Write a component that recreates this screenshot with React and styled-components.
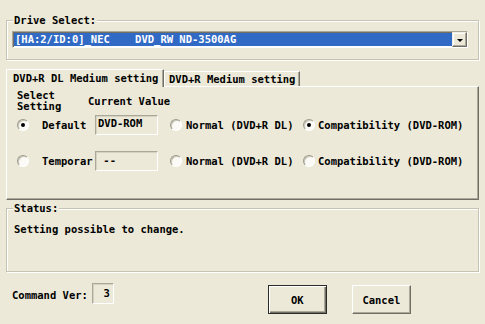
import React from 'react';
import styled, { createGlobalStyle } from 'styled-components';

const Global = createGlobalStyle`
  html, body { margin: 0; padding: 0; background: #ECE9D8; }
  body {
    font-family: "DejaVu Sans Mono", "Liberation Mono", monospace;
    font-size: 10.5px;
    font-weight: bold;
    line-height: 12px;
    color: #000;
  }
`;

const Window = styled.div`
  width: 485px;
  height: 324px;
  box-sizing: border-box;
  padding: 20px 6px 0 6px;
  background: #ECE9D8;
  display: flex;
  flex-direction: column;
  overflow: hidden;
`;

const GroupBox = styled.div`
  position: relative;
  box-sizing: border-box;
  height: ${p => p.$h}px;
  margin-top: ${p => p.$mt || 0}px;
  border: 1px solid #C6C3B2;
  box-shadow: inset 1px 1px 0 #fff, 1px 1px 0 #fff;
  padding: ${p => p.$pad};
`;

const Legend = styled.span`
  position: absolute;
  top: -7px;
  left: 6px;
  padding: 0 1px;
  background: #ECE9D8;
  white-space: pre;
`;

const Combo = styled.div`
  display: flex;
  width: 456px;
  height: 17px;
  box-sizing: border-box;
  border: 1px solid;
  border-color: #ACA899 #fff #fff #ACA899;
  box-shadow: inset 1px 1px 0 #716F64;
  background: #fff;
`;

const Selection = styled.div`
  flex: 1;
  height: 13px;
  margin: 1px 0 1px 1px;
  background: #316AC5;
  color: #fff;
  white-space: pre;
  line-height: 13px;
  padding-left: 1px;
`;

const DropButton = styled.div`
  width: 15px;
  height: 15px;
  box-sizing: border-box;
  border: 1px solid;
  border-color: #F1EFE2 #716F64 #716F64 #F1EFE2;
  box-shadow: inset -1px -1px 0 #ACA899, inset 1px 1px 0 #fff;
  background: #ECE9D8;
  display: flex;
  align-items: center;
  justify-content: center;
  &::after {
    content: "";
    margin-top: 2px;
    border-left: 3px solid transparent;
    border-right: 3px solid transparent;
    border-top: 3px solid #000;
  }
`;

const TabStrip = styled.div`
  display: flex;
  align-items: flex-end;
  height: 17px;
  margin-top: 9px;
  position: relative;
  z-index: 1;
`;

const Tab = styled.div`
  box-sizing: border-box;
  width: ${p => p.$w}px;
  height: ${p => (p.$active ? 18 : 15)}px;
  margin-bottom: ${p => (p.$active ? -1 : 0)}px;
  padding-left: ${p => p.$pl}px;
  padding-top: ${p => (p.$active ? 2 : 1)}px;
  border-left: 1px solid #fff;
  border-top: 1px solid #fff;
  border-right: 1px solid #716F64;
  box-shadow: inset -1px 0 0 #ACA899;
  background: #ECE9D8;
  white-space: pre;
`;

const Panel = styled.div`
  box-sizing: border-box;
  height: 114px;
  border: 1px solid;
  border-color: #fff #716F64 #716F64 #fff;
  box-shadow: inset -1px -1px 0 #ACA899;
  padding: 3px 0 0 0;
  display: flex;
  flex-direction: column;
`;

const HeaderRow = styled.div`
  display: flex;
  align-items: center;
  padding-left: 10px;
`;

const HeaderStack = styled.div`
  width: 71px;
  line-height: 11px;
`;

const SettingRow = styled.div`
  display: flex;
  align-items: center;
  height: 20px;
  margin-top: ${p => p.$mt}px;
  padding-left: 10px;
`;

const RadioCircle = styled.span`
  flex: none;
  width: 12px;
  height: 12px;
  box-sizing: border-box;
  border-radius: 50%;
  border: 1px solid;
  border-color: #9D9A8C #fff #fff #9D9A8C;
  box-shadow: inset 1px 1px 0 #C9C6B6;
  background: #FBFAF6;
  display: flex;
  align-items: center;
  justify-content: center;
  &::after {
    content: "";
    display: ${p => (p.$on ? 'block' : 'none')};
    width: 4px;
    height: 4px;
    border-radius: 50%;
    background: #000;
  }
`;

const RowLabel = styled.span`
  width: 53px;
  margin-left: 13px;
  white-space: pre;
`;

const ValueBox = styled.div`
  box-sizing: border-box;
  width: ${p => p.$w}px;
  height: ${p => p.$h}px;
  border: 1px solid;
  border-color: #ACA899 #fff #fff #ACA899;
  box-shadow: inset 1px 1px 0 #D5D2C1;
  padding: ${p => p.$pad};
  text-align: ${p => p.$align || 'left'};
  white-space: pre;
  align-self: flex-start;
`;

const Option = styled.label`
  display: flex;
  align-items: center;
  gap: ${p => p.$gap}px;
  width: ${p => (p.$w ? `${p.$w}px` : 'auto')};
  margin-left: ${p => p.$ml || 0}px;
  white-space: pre;
`;

const StatusText = styled.div`
  white-space: pre;
`;

const BottomRow = styled.div`
  display: flex;
  align-items: flex-start;
  margin-top: 11px;
  padding-left: 6px;
`;

const CmdLabel = styled.span`
  margin-top: 6px;
  margin-right: 4px;
  white-space: pre;
`;

const Button = styled.button`
  box-sizing: border-box;
  width: 59px;
  height: 29px;
  margin-top: 2px;
  margin-left: ${p => p.$ml}px;
  padding: 0;
  font: inherit;
  color: #000;
  background: #ECE9D8;
  border: 1px solid;
  border-color: ${p => (p.$default ? '#2B2B2B' : '#fff #716F64 #716F64 #fff')};
  box-shadow: ${p =>
    p.$default
      ? 'inset 1px 1px 0 #fff, inset -1px -1px 0 #716F64, inset -2px -2px 0 #ACA899'
      : 'inset -1px -1px 0 #ACA899'};
`;

export default function App() {
  return (
    <>
      <Global />
      <Window>
        <GroupBox $h={40} $pad="10px 10px 0 5px">
          <Legend>Drive Select:</Legend>
          <Combo>
            <Selection>[HA:2/ID:0]_NEC    DVD_RW ND-3500AG</Selection>
            <DropButton />
          </Combo>
        </GroupBox>

        <TabStrip>
          <Tab $active $w={158} $pl={6}>DVD+R DL Medium setting</Tab>
          <Tab $w={136} $pl={4}>DVD+R Medium setting</Tab>
        </TabStrip>
        <Panel>
          <HeaderRow>
            <HeaderStack>
              Select
              <br />
              Setting
            </HeaderStack>
            <span>Current Value</span>
          </HeaderRow>

          <SettingRow $mt={3}>
            <RadioCircle $on />
            <RowLabel>Default</RowLabel>
            <ValueBox $w={63} $h={20} $pad="1px 0 0 2px">DVD-ROM</ValueBox>
            <Option $w={133} $ml={12} $gap={4}>
              <RadioCircle />
              Normal (DVD+R DL)
            </Option>
            <Option $gap={3}>
              <RadioCircle $on />
              Compatibility (DVD-ROM)
            </Option>
          </SettingRow>

          <SettingRow $mt={16}>
            <RadioCircle />
            <RowLabel>Temporar</RowLabel>
            <ValueBox $w={63} $h={20} $pad="2px 0 0 1px">{' --'}</ValueBox>
            <Option $w={133} $ml={12} $gap={4}>
              <RadioCircle />
              Normal (DVD+R DL)
            </Option>
            <Option $gap={3}>
              <RadioCircle />
              Compatibility (DVD-ROM)
            </Option>
          </SettingRow>
        </Panel>

        <GroupBox $h={64} $mt={8} $pad="14px 0 0 7px">
          <Legend>Status:</Legend>
          <StatusText>Setting possible to change.</StatusText>
        </GroupBox>

        <BottomRow>
          <CmdLabel>Command Ver:</CmdLabel>
          <ValueBox $w={22} $h={21} $pad="3px 3px 0 0" $align="right">3</ValueBox>
          <Button $default $ml={154}>OK</Button>
          <Button $ml={25}>Cancel</Button>
        </BottomRow>
      </Window>
    </>
  );
}
